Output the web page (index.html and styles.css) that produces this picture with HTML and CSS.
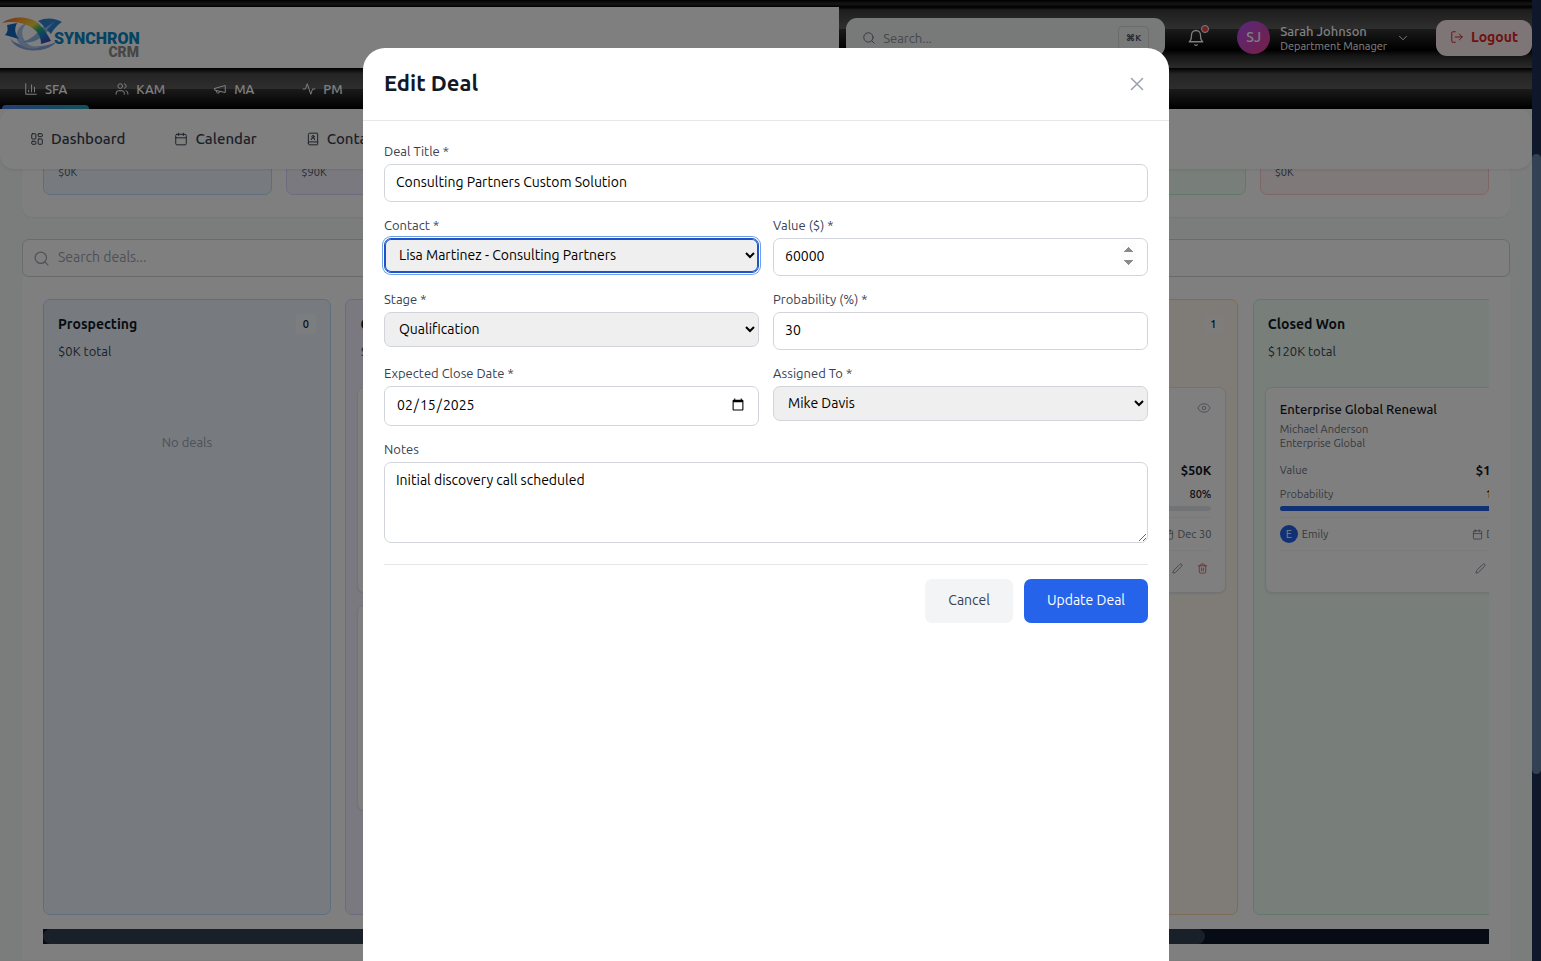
FILE: index.html
```html
<!DOCTYPE html>
<html lang="en">
<head>
    <meta charset="UTF-8">
    <meta name="viewport" content="width=device-width, initial-scale=1.0">
    <title>Synchron CRM - Deals</title>
    <link rel="stylesheet" href="styles.css">
</head>
<body>
    <!-- shared icons -->
    <svg class="sprite" aria-hidden="true">
        <symbol id="i-search" viewBox="0 0 24 24"><circle cx="11" cy="11" r="8"/><path d="m21 21-4.3-4.3"/></symbol>
        <symbol id="i-calendar" viewBox="0 0 24 24"><path d="M8 2v4M16 2v4M3 10h18"/><rect x="3" y="4" width="18" height="18" rx="2"/></symbol>
        <symbol id="i-pencil" viewBox="0 0 24 24"><path d="M21.2 6.8a2.8 2.8 0 0 0-4-4L3.8 16.2a2 2 0 0 0-.5.8L2 21.4a.5.5 0 0 0 .6.6L7 20.700a2 2 0 0 0 .8-.5z"/></symbol>
        <symbol id="i-trash" viewBox="0 0 24 24"><path d="M3 6h18M19 6v14a2 2 0 0 1-2 2H7a2 2 0 0 1-2-2V6M8 6V4a2 2 0 0 1 2-2h4a2 2 0 0 1 2 2v2M10 11v6M14 11v6"/></symbol>
        <symbol id="i-eye" viewBox="0 0 24 24"><path d="M2 12.300a1 1 0 0 1 0-.6 10.700 10.700 0 0 1 20 0 1 1 0 0 1 0 .6 10.700 10.700 0 0 1-20 0"/><circle cx="12" cy="12" r="3"/></symbol>
    </svg>

    <div class="layout">
        <div class="app">
            <header class="topbar">
                <div class="brand">
                    <svg class="logo" viewBox="0 0 140 44" role="img" aria-label="Synchron CRM">
                        <defs>
                            <linearGradient id="arc" x1="0" x2="1" y1="0" y2="1">
                                <stop offset="0" stop-color="#e8552d"/>
                                <stop offset=".25" stop-color="#ffa62e"/>
                                <stop offset=".45" stop-color="#f0d83a"/>
                                <stop offset=".6" stop-color="#2fae76"/>
                                <stop offset=".75" stop-color="#1c7fd0"/>
                                <stop offset="1" stop-color="#5b2a9a"/>
                            </linearGradient>
                        </defs>
                        <path d="M10 22c6 9 30 12 46 4-7 11-40 13-46-4z" fill="#86a6dc"/>
                        <path d="M17 24c-2-8 2-15 10-17-6 6-6 12-2 18s12 7 18 5c-9 5-22 3-26-6z" fill="#a9c6ee"/>
                        <path d="M22 26c10-3 14-8 20-14l8-8 4 4-7 8c-7 8-16 12-25 10z" fill="#8fb8ea"/>
                        <path d="M38 5c8-4 17-3 24 1-3 2-7 5-11 12l-4-4 7-8-9 6c-2-3-4-5-7-7z" fill="#2f86d4"/>
                        <path d="M7 9l10-2c-3 6-2 11 2 16l-14-4c3-3 3-6 2-10z" fill="#1269c0"/>
                        <path d="M2 7C12 0 30-1 40 9c5 5 8 10 11 16l-10 3c0-8-4-14-12-18C21 6 11 5 2 7z" fill="url(#arc)"/>
                        <text class="logo-name" x="54" y="28">SYNCHRON</text>
                        <text class="logo-sub" x="139" y="41" text-anchor="end">CRM</text>
                    </svg>
                </div>
                <div class="topbar-tools">
                    <label class="quick-search">
                        <svg class="icon"><use href="#i-search"/></svg>
                        <input type="text" placeholder="Search..." aria-label="Search">
                        <kbd>⌘K</kbd>
                    </label>
                    <button type="button" class="bell" aria-label="Notifications">
                        <svg class="icon" viewBox="0 0 24 24"><path d="M6 8a6 6 0 0 1 12 0c0 7 3 9 3 9H3s3-2 3-9"/><path d="M10.300 21a2 2 0 0 0 3.400 0"/></svg>
                        <span class="dot"></span>
                    </button>
                    <button type="button" class="profile">
                        <span class="avatar">SJ</span>
                        <span class="who"><span class="who-name">Sarah Johnson</span><span class="who-role">Department Manager</span></span>
                        <svg class="icon" viewBox="0 0 24 24"><path d="m6 9 6 6 6-6"/></svg>
                    </button>
                    <button type="button" class="logout">
                        <svg class="icon" viewBox="0 0 24 24"><path d="M9 21H5a2 2 0 0 1-2-2V5a2 2 0 0 1 2-2h4M16 17l5-5-5-5M21 12H9"/></svg>
                        Logout
                    </button>
                </div>
            </header>

            <nav class="modules">
                <a href="#" class="module active"><svg class="icon" viewBox="0 0 24 24"><path d="M3 3v18h18M18 17V9M13 17V5M8 17v-3"/></svg>SFA</a>
                <a href="#" class="module"><svg class="icon" viewBox="0 0 24 24"><path d="M16 21v-2a4 4 0 0 0-4-4H6a4 4 0 0 0-4 4v2M22 21v-2a4 4 0 0 0-3-3.900M16 3.100a4 4 0 0 1 0 7.800"/><circle cx="9" cy="7" r="4"/></svg>KAM</a>
                <a href="#" class="module"><svg class="icon" viewBox="0 0 24 24"><path d="m3 11 18-5v12L3 14v-3zM11.600 16.800a3 3 0 1 1-5.800-1.600"/></svg>MA</a>
                <a href="#" class="module"><svg class="icon" viewBox="0 0 24 24"><path d="M22 12h-4l-3 9L9 3l-3 9H2"/></svg>PM</a>
            </nav>

            <nav class="subnav">
                <a href="#"><svg class="icon" viewBox="0 0 24 24"><rect x="3" y="3" width="7" height="9" rx="1"/><rect x="14" y="3" width="7" height="5" rx="1"/><rect x="14" y="12" width="7" height="9" rx="1"/><rect x="3" y="16" width="7" height="5" rx="1"/></svg>Dashboard</a>
                <a href="#"><svg class="icon"><use href="#i-calendar"/></svg>Calendar</a>
                <a href="#"><svg class="icon" viewBox="0 0 24 24"><path d="M15 13a3 3 0 1 0-6 0"/><path d="M4 19.500v-15A2.500 2.500 0 0 1 6.500 2H19a1 1 0 0 1 1 1v18a1 1 0 0 1-1 1H6.500a1 1 0 0 1 0-5H20"/><circle cx="12" cy="8" r="2"/></svg>Contacts</a>
            </nav>

            <main class="content">
                <section class="stats">
                    <div class="stat blue">$0K</div>
                    <div class="stat purple">$90K</div>
                    <div class="stat yellow">$60K</div>
                    <div class="stat orange">$50K</div>
                    <div class="stat green">$120K</div>
                    <div class="stat red">$0K</div>
                </section>

                <label class="deal-search">
                    <svg class="icon"><use href="#i-search"/></svg>
                    <input type="text" placeholder="Search deals..." aria-label="Search deals">
                </label>

                <section class="board-panel">
                    <div class="board">
                        <div class="column blue">
                            <div class="column-head"><h3>Prospecting</h3><span class="count">0</span></div>
                            <p class="column-total">$0K total</p>
                            <p class="empty">No deals</p>
                        </div>
                        <div class="column purple">
                            <div class="column-head"><h3>Qualification</h3><span class="count">2</span></div>
                            <p class="column-total">$90K total</p>
                            <div class="deal"></div>
                            <div class="deal"></div>
                        </div>
                        <div class="column yellow">
                            <div class="column-head"><h3>Proposal</h3><span class="count">1</span></div>
                            <p class="column-total">$60K total</p>
                        </div>
                        <div class="column orange">
                            <div class="column-head"><h3>Negotiation</h3><span class="count">1</span></div>
                            <p class="column-total">$50K total</p>
                            <article class="deal">
                                <div class="deal-head"><h4>Annual License</h4><svg class="icon"><use href="#i-eye"/></svg></div>
                                <p>Anna Lee</p>
                                <p>Northwind</p>
                                <div class="deal-row value"><span>Value</span><b>$50K</b></div>
                                <div class="deal-row"><span>Probability</span><b>80%</b></div>
                                <div class="bar"><div class="bar-fill" style="width: 80%"></div></div>
                                <div class="deal-owner"><span class="owner-mark">M</span>Mike<span class="due"><svg class="icon"><use href="#i-calendar"/></svg>Dec 30</span></div>
                                <div class="deal-actions">
                                    <button type="button" aria-label="Edit deal"><svg class="icon"><use href="#i-pencil"/></svg></button>
                                    <button type="button" class="delete" aria-label="Delete deal"><svg class="icon"><use href="#i-trash"/></svg></button>
                                </div>
                            </article>
                        </div>
                        <div class="column green">
                            <div class="column-head"><h3>Closed Won</h3><span class="count">1</span></div>
                            <p class="column-total">$120K total</p>
                            <article class="deal">
                                <div class="deal-head"><h4>Enterprise Global Renewal</h4><svg class="icon"><use href="#i-eye"/></svg></div>
                                <p>Michael Anderson</p>
                                <p>Enterprise Global</p>
                                <div class="deal-row value"><span>Value</span><b>$120K</b></div>
                                <div class="deal-row"><span>Probability</span><b>100%</b></div>
                                <div class="bar"><div class="bar-fill" style="width: 100%"></div></div>
                                <div class="deal-owner"><span class="owner-mark">E</span>Emily<span class="due"><svg class="icon"><use href="#i-calendar"/></svg>Dec 5</span></div>
                                <div class="deal-actions">
                                    <button type="button" aria-label="Edit deal"><svg class="icon"><use href="#i-pencil"/></svg></button>
                                    <button type="button" class="delete" aria-label="Delete deal"><svg class="icon"><use href="#i-trash"/></svg></button>
                                </div>
                            </article>
                        </div>
                    </div>
                    <div class="board-scroll"><div class="board-thumb"></div></div>
                </section>
            </main>

            <div class="overlay">
                <div class="modal" role="dialog" aria-labelledby="modal-title">
                    <div class="modal-head">
                        <h2 id="modal-title">Edit Deal</h2>
                        <button type="button" class="close" aria-label="Close"><svg class="icon" viewBox="0 0 24 24"><path d="M18 6 6 18M6 6l12 12"/></svg></button>
                    </div>
                    <form class="deal-form">
                        <div class="field wide">
                            <label for="title">Deal Title *</label>
                            <input type="text" id="title" value="Consulting Partners Custom Solution">
                        </div>
                        <div class="field">
                            <label for="contact">Contact *</label>
                            <select id="contact" class="focused"><option>Lisa Martinez - Consulting Partners</option></select>
                        </div>
                        <div class="field">
                            <label for="value">Value ($) *</label>
                            <input type="number" id="value" class="spin" value="60000">
                        </div>
                        <div class="field">
                            <label for="stage">Stage *</label>
                            <select id="stage"><option>Qualification</option></select>
                        </div>
                        <div class="field">
                            <label for="probability">Probability (%) *</label>
                            <input type="number" id="probability" value="30">
                        </div>
                        <div class="field">
                            <label for="close-date">Expected Close Date *</label>
                            <input type="date" id="close-date" value="2025-02-15">
                        </div>
                        <div class="field">
                            <label for="assigned">Assigned To *</label>
                            <select id="assigned"><option>Mike Davis</option></select>
                        </div>
                        <div class="field wide">
                            <label for="notes">Notes</label>
                            <textarea id="notes">Initial discovery call scheduled</textarea>
                        </div>
                        <div class="form-actions wide">
                            <button type="button" class="btn">Cancel</button>
                            <button type="submit" class="btn primary">Update Deal</button>
                        </div>
                    </form>
                </div>
            </div>
        </div>
        <div class="page-scroll"><div class="page-thumb"></div></div>
    </div>
</body>
</html>
```

FILE: styles.css
```css
* {
    box-sizing: border-box;
}
body {
    margin: 0;
    font-family: Ubuntu, "Noto Sans", sans-serif;
    font-size: 14px;
    line-height: 20px;
    color: #111827;
}
h2, h3, h4, p {
    margin: 0;
}
a {
    color: inherit;
    text-decoration: none;
}
button, input, select, textarea {
    font: inherit;
    color: inherit;
}
button {
    border: 0;
    padding: 0;
    background: none;
    cursor: pointer;
}
.sprite {
    display: none;
}
.icon {
    width: 14px;
    height: 14px;
    flex: none;
    fill: none;
    stroke: currentColor;
    stroke-width: 1.7;
    stroke-linecap: round;
    stroke-linejoin: round;
}

/* Page frame */
.layout {
    display: flex;
    height: 100vh;
    overflow: hidden;
}
.app {
    position: relative;
    flex: 1;
    min-width: 0;
    display: flex;
    flex-direction: column;
    overflow: hidden;
    background: #f6fbf8;
}
.page-scroll {
    width: 9px;
    padding-top: 154px;
    background: #0f172a;
}
.page-thumb {
    height: 620px;
    border-radius: 5px;
    background: #334155;
}

/* Top bar */
.topbar {
    display: flex;
    flex: none;
    height: 68px;
    padding-top: 7px;
    color: #fff;
    background:
        linear-gradient(#000, #2c2c2c 4px, #000 7px, transparent 7px),
        linear-gradient(#000 7px, #3c3c3c 10px, #5e5e5e 29px, #363636 29px, #000 50px, #2c2c2c 56px, #565656 68px);
}
.brand {
    flex: 1;
    display: flex;
    align-items: center;
    background: #fff;
}
.logo {
    width: 140px;
    height: 44px;
}
.logo-name, .logo-sub {
    font-family: Roboto, sans-serif;
    font-weight: 900;
    font-size: 16px;
    fill: #0a86c4;
}
.logo-sub {
    font-size: 14px;
    fill: #8c8c8c;
}
.topbar-tools {
    display: flex;
    align-items: center;
    padding-left: 7px;
}
.quick-search {
    display: flex;
    align-items: center;
    width: 319px;
    height: 39px;
    padding: 0 16px;
    gap: 7px;
    border-radius: 11px;
    background: #f0f4f2;
    color: #6b7280;
}
.quick-search input {
    flex: 1;
    min-width: 0;
    border: 0;
    padding: 0;
    font-size: 13px;
    background: none;
}
.quick-search input::placeholder {
    color: #8b929e;
}
.quick-search kbd {
    padding: 1px 7px;
    border: 1px solid #d3d8d6;
    border-radius: 4px;
    font-family: inherit;
    font-size: 9px;
    font-weight: 600;
    color: #4b5563;
}
.bell {
    position: relative;
    display: flex;
    margin-left: 22px;
}
.bell .icon {
    width: 18px;
    height: 18px;
}
.dot {
    position: absolute;
    top: -4px;
    right: -4px;
    width: 8px;
    height: 8px;
    border: 1px solid #fff;
    border-radius: 50%;
    background: #ef4444;
}
.profile {
    display: flex;
    align-items: center;
    margin: 0 26px 0 32px;
    text-align: left;
}
.avatar {
    width: 33px;
    height: 33px;
    margin-right: 10px;
    border-radius: 50%;
    background: linear-gradient(135deg, #b050f5, #ec3f8e);
    font-weight: 500;
    line-height: 33px;
    text-align: center;
}
.who {
    display: flex;
    flex-direction: column;
    margin-right: 9px;
}
.who-name {
    font-size: 13px;
    font-weight: 500;
    line-height: 16px;
}
.who-role {
    font-size: 11px;
    line-height: 14px;
}
.logout {
    display: flex;
    align-items: center;
    height: 36px;
    padding: 0 14px 1px;
    gap: 7px;
    border-radius: 11px;
    background: #fdecec;
    color: #e02222;
    font-weight: 600;
}

/* Module tabs */
.modules {
    display: flex;
    flex: none;
    height: 41px;
    padding: 0 2px;
    gap: 4px;
    background: linear-gradient(#000, #4a4a4a 6px, #5c5c5c 21px, #363636 21px, #000 41px);
}
.module {
    position: relative;
    display: flex;
    align-items: center;
    gap: 7px;
    padding: 0 22px;
    font-size: 13px;
    font-weight: 500;
    color: #fff;
}
.module.active::after {
    content: "";
    position: absolute;
    left: 0;
    right: 0;
    bottom: 0;
    height: 4px;
    border-radius: 4px 4px 0 0;
    background: linear-gradient(90deg, #4b7bea, #1fa3b8);
}

.subnav {
    position: relative;
    z-index: 1;
    display: flex;
    align-items: center;
    flex: none;
    height: 60px;
    padding: 0 9px;
    gap: 7px;
    border-radius: 14px;
    background: #fff;
    box-shadow: 0 1px 3px rgba(0, 0, 0, 0.1);
    color: #374151;
    font-size: 15px;
    font-weight: 500;
}
.subnav a {
    display: flex;
    align-items: center;
    gap: 7px;
    padding: 0 21px;
}

/* Stage colours */
.blue { background: #eff6ff; border-color: #bfdbfe; }
.purple { background: #f5f3ff; border-color: #ddd6fe; }
.yellow { background: #fefce8; border-color: #fef08a; }
.orange { background: #fff7ed; border-color: #fed7aa; }
.green { background: #f0fdf4; border-color: #bbf7d0; }
.red { background: #fef2f2; border-color: #fecaca; }

/* Content */
.content {
    flex: 1;
    margin-top: -16px;
    padding: 0 22px;
}
.stats {
    display: grid;
    grid-template-columns: repeat(6, 1fr);
    gap: 14px;
    padding: 0 21px 22px;
    border-radius: 0 0 11px 11px;
    background: #fff;
    box-shadow: 0 1px 2px rgba(0, 0, 0, 0.06);
}
.stat {
    padding: 10px 14px 14px;
    border-width: 1px;
    border-style: solid;
    border-radius: 7px;
    font-size: 11px;
    line-height: 16px;
    color: #4b5563;
}
.deal-search {
    display: flex;
    align-items: center;
    gap: 8px;
    height: 38px;
    margin-top: 22px;
    padding: 0 10px;
    border: 1px solid #d1d5db;
    border-radius: 7px;
    background: #fff;
    color: #9ca3af;
}
.deal-search .icon {
    width: 17px;
    height: 17px;
}
.deal-search input {
    flex: 1;
    border: 0;
    padding: 0 0 2px;
    background: none;
}
.deal-search input::placeholder {
    color: #9ca3af;
}
.board-panel {
    padding: 22px 21px 16px;
    background: #fff;
}
.board {
    display: flex;
    gap: 1%;
    overflow: hidden;
}
.column {
    flex: 0 0 288px;
    height: 616px;
    padding: 14px 11px;
    border-width: 1px;
    border-style: solid;
    border-radius: 7px;
}
.column-head {
    display: flex;
    align-items: flex-start;
    justify-content: space-between;
    height: 21px;
    padding: 0 3px;
}
.column-head h3 {
    font-size: 14px;
    font-weight: 600;
}
.count {
    padding: 0 7px;
    border-radius: 4px;
    background: rgba(255, 255, 255, 0.5);
    color: #111827;
    font-size: 11px;
    font-weight: 500;
    line-height: 20px;
}
.column-total {
    margin: 7px 3px 27px;
    font-size: 13px;
    line-height: 18px;
    color: #374151;
}
.empty {
    padding-top: 46px;
    font-size: 13px;
    line-height: 18px;
    text-align: center;
    color: #9ca3af;
}
.deal {
    height: 206px;
    margin-bottom: 12px;
    padding: 13px 14px;
    border: 1px solid #e5e7eb;
    border-radius: 7px;
    background: #fff;
    box-shadow: 0 1px 2px rgba(0, 0, 0, 0.08);
    font-size: 11px;
    line-height: 14px;
    color: #6b7280;
}
.deal-head {
    display: flex;
    align-items: flex-start;
    justify-content: space-between;
    margin-bottom: 4px;
    color: #9ca3af;
}
.deal-head h4 {
    font-size: 13px;
    font-weight: 500;
    line-height: 17px;
    color: #111827;
}
.deal-row {
    display: flex;
    align-items: center;
    justify-content: space-between;
    margin-bottom: 5px;
    line-height: 14px;
}
.deal-row.value {
    margin: 11px 0 8px;
    line-height: 18px;
}
.deal-row b {
    font-weight: 500;
    color: #111827;
}
.deal-row.value b {
    font-size: 13px;
    font-weight: 700;
}
.bar {
    height: 5px;
    border-radius: 3px;
    background: #e5e7eb;
}
.bar-fill {
    height: 5px;
    border-radius: 3px;
    background: #2563eb;
}
.deal-owner {
    display: flex;
    align-items: center;
    gap: 4px;
    height: 34px;
    margin-top: 6px;
    border-top: 1px solid #f3f4f6;
    border-bottom: 1px solid #f3f4f6;
}
.owner-mark {
    width: 18px;
    height: 18px;
    border-radius: 50%;
    background: #2563eb;
    color: #fff;
    line-height: 18px;
    text-align: center;
}
.due {
    display: flex;
    align-items: center;
    gap: 3px;
    margin-left: auto;
}
.due .icon, .deal-actions .icon {
    width: 11px;
    height: 11px;
}
.deal-actions {
    display: flex;
    justify-content: flex-end;
    gap: 14px;
    padding: 12px 3px 0;
}
.deal-actions .delete {
    color: #ef4444;
}
.board-scroll {
    height: 15px;
    margin-top: 14px;
    background: #0f172a;
}
.board-thumb {
    width: calc(80% + 5px);
    height: 15px;
    border-radius: 8px;
    background: #334155;
}

/* Edit dialog */
.overlay {
    position: absolute;
    inset: 0;
    z-index: 2;
    display: flex;
    justify-content: center;
    padding-top: 48px;
    background: rgba(0, 0, 0, 0.5);
}
.modal {
    width: 100%;
    max-width: 806px;
    border-radius: 22px 22px 0 0;
    background: #fff;
}
.modal-head {
    display: flex;
    align-items: center;
    justify-content: space-between;
    height: 73px;
    padding: 0 21px;
    border-bottom: 1px solid #e5e7eb;
}
.modal-head h2 {
    padding-bottom: 2px;
    font-size: 22px;
    font-weight: 600;
    line-height: 28px;
}
.close {
    display: flex;
    color: #9ca3af;
}
.close .icon {
    width: 22px;
    height: 22px;
}
.deal-form {
    display: grid;
    grid-template-columns: 1fr 1fr;
    gap: 14px;
    align-items: start;
    padding: 21px;
}
.wide {
    grid-column: 1 / -1;
}
.field {
    display: flex;
    flex-direction: column;
    gap: 3px;
}
.field label {
    font-size: 13px;
    line-height: 19px;
    color: #374151;
}
.field input, .field select, .field textarea {
    width: 100%;
    height: 38px;
    padding: 6px 11px 8px;
    border: 1px solid #d1d5db;
    border-radius: 7px;
    background: #fff;
    color: #000;
}
.field select {
    height: 35px;
    padding: 6px 10px 8px;
    background: #efefef;
}
.field select.focused, .field select:focus {
    outline: 0;
    border-color: #1d55c4;
    box-shadow: inset 0 0 0 1px #1d55c4, 0 0 0 1px #fff, 0 0 0 2px #6f9fe8;
}
.field input[type=date] {
    height: 40px;
}
.field .spin::-webkit-inner-spin-button {
    height: 26px;
    opacity: 1;
}
.field textarea {
    display: block;
    height: 81px;
    padding-top: 7px;
    resize: vertical;
}
.form-actions {
    display: flex;
    justify-content: flex-end;
    gap: 11px;
    margin-top: 7px;
    padding-top: 14px;
    border-top: 1px solid #e5e7eb;
}
.btn {
    height: 44px;
    padding: 0 23px 2px;
    border-radius: 7px;
    background: #f3f4f6;
    color: #374151;
}
.btn.primary {
    background: #2563eb;
    color: #fff;
}
```
